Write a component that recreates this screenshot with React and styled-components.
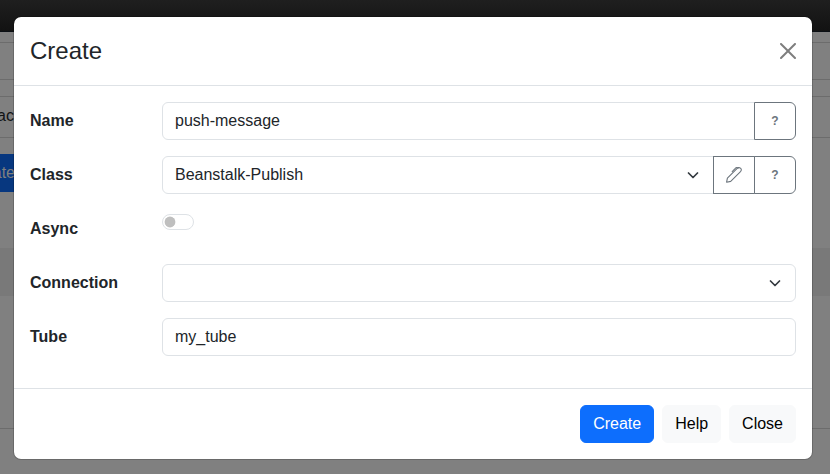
import React from "react";
import styled, { createGlobalStyle, css } from "styled-components";

const GlobalStyle = createGlobalStyle`
  *, *::before, *::after { box-sizing: border-box; }
  body {
    margin: 0;
    overflow: hidden;
    font-family: "Liberation Sans", Arial, sans-serif;
    font-size: 16px;
    line-height: 24px;
    color: #212529;
    background: #fff;
  }
  button, input { font: inherit; color: inherit; margin: 0; }
`;

const Page = styled.div`
  position: relative;
  height: 474px;
  overflow: hidden;
  background: #808080;
`;

const NavBar = styled.div`
  height: 32px;
  background: linear-gradient(#1f1f1f, #121212);
  border-bottom: 1px solid #0b0f14;
`;

const Strip = styled.div`
  height: ${(p) => p.$height}px;
  border-bottom: ${(p) => (p.$line ? "1px solid #6c6c6c" : "0")};
  background: ${(p) => p.$fill || "transparent"};
`;

const SearchField = styled.div`
  height: 41px;
  padding: 7px 0;
  border-bottom: 1px solid #6c6c6c;
  color: #111315;
  white-space: nowrap;
`;

const PageAction = styled.div`
  width: 60px;
  height: 38px;
  margin-top: 16px;
  padding: 7px 0;
  background: #07377f;
  color: #808080;
`;

const PageText = styled.span`
  display: block;
  width: ${(p) => p.$width}px;
  direction: rtl;
  white-space: nowrap;
`;

const Overlay = styled.div`
  position: absolute;
  inset: 0;
  display: flex;
  align-items: flex-start;
  justify-content: center;
  padding: 16px 17px 0 13px;
`;

const Dialog = styled.section`
  width: 800px;
  height: 444px;
  flex: none;
  display: flex;
  flex-direction: column;
  background: #fff;
  background-clip: padding-box;
  border: 1px solid rgba(0, 0, 0, 0.175);
  border-radius: 8px;
`;

const Header = styled.header`
  display: flex;
  align-items: center;
  justify-content: space-between;
  height: 69px;
  padding: 0 16px;
  border-bottom: 1px solid #dee2e6;
`;

const Title = styled.h4`
  margin: 0;
  font-size: 24px;
  font-weight: 400;
  line-height: 36px;
`;

const CloseIcon = styled.button`
  display: flex;
  padding: 0;
  border: 0;
  background: none;
  opacity: 0.5;
`;

const Body = styled.div`
  flex: 1;
  display: flex;
  flex-direction: column;
  gap: 16px;
  padding: 16px;
`;

const Row = styled.div`
  display: grid;
  grid-template-columns: 132px 1fr;
  height: 38px;
`;

const Label = styled.label`
  padding-top: 7px;
  font-weight: 700;
`;

const Group = styled.div`
  display: flex;
  min-width: 0;
`;

const control = css`
  flex: 1;
  min-width: 0;
  height: 38px;
  padding: 6px 12px;
  background: #fff;
  border: 1px solid #dee2e6;
  border-radius: ${(p) => (p.$joined ? "6px 0 0 6px" : "6px")};
`;

const Input = styled.input`
  ${control}
  outline: 0;
`;

const Select = styled.div`
  ${control}
  display: flex;
  align-items: center;
  justify-content: space-between;
`;

const Addon = styled.button`
  display: flex;
  align-items: center;
  justify-content: center;
  width: 42px;
  height: 38px;
  margin-left: -1px;
  padding: 0;
  color: #6c757d;
  background: #fff;
  border: 1px solid #6c757d;
  border-radius: ${(p) => (p.$last ? "0 6px 6px 0" : "0")};
`;

const HelpMark = styled.span`
  font-size: 12px;
  font-weight: 700;
  line-height: 12px;
`;

const Switch = styled.span`
  width: 32px;
  height: 16px;
  margin-top: 4px;
  padding: 2px;
  border: 1px solid #dee2e6;
  border-radius: 8px;
  &::before {
    content: "";
    display: block;
    width: 10px;
    height: 10px;
    border-radius: 50%;
    background: #bfbfbf;
    box-shadow: 0 0 0 0.4px #bfbfbf;
  }
`;

const Footer = styled.footer`
  display: flex;
  justify-content: flex-end;
  gap: 8px;
  height: 71px;
  padding: 16px;
  border-top: 1px solid #dee2e6;
`;

const Button = styled.button`
  height: 38px;
  padding: 6px 12px;
  line-height: 24px;
  border-radius: 6px;
  border: 1px solid ${(p) => (p.$primary ? "#0d6efd" : "#f8f9fa")};
  background: ${(p) => (p.$primary ? "#0d6efd" : "#f8f9fa")};
  color: ${(p) => (p.$primary ? "#fff" : "#000")};
`;

const Chevron = () => (
  <svg width="16" height="12" viewBox="0 0 16 12" fill="none">
    <path d="m3.5 4 4.5 4.5L12.5 4" stroke="#343a40" strokeWidth="1.75" strokeLinecap="round" strokeLinejoin="round" />
  </svg>
);

const CloseGlyph = () => (
  <svg width="16" height="16" viewBox="0 0 16 16">
    <path d="M.293.293a1 1 0 0 1 1.414 0L8 6.586 14.293.293a1 1 0 1 1 1.414 1.414L9.414 8l6.293 6.293a1 1 0 0 1-1.414 1.414L8 9.414l-6.293 6.293a1 1 0 0 1-1.414-1.414L6.586 8 .293 1.707a1 1 0 0 1 0-1.414z" />
  </svg>
);

const PenGlyph = () => (
  <svg width="16" height="16" viewBox="0 0 16 16" fill="none" stroke="currentColor" strokeLinejoin="round" strokeLinecap="round">
    <path d="M.6 15.2 1.4 11.2 11.2 1.4Q12.3.3 13.6.7Q15.1 1.2 15.3 2.5Q15.5 3.6 14.5 4.7L4.7 14.4Z" strokeWidth="1.1" />
    <path d="M6.2 4.6 9.3 1.3Q10.1.4 11.2.6L12.6.8" strokeWidth="1.1" />
  </svg>
);

const HelpAddon = () => (
  <Addon $last aria-label="Help">
    <HelpMark>?</HelpMark>
  </Addon>
);

export default function App() {
  return (
    <Page>
      <GlobalStyle />
      <NavBar />
      <Strip $height={11} $line />
      <Strip $height={37} $line />
      <Strip $height={17} $line />
      <SearchField>
        <PageText $width={14}>ac</PageText>
      </SearchField>
      <PageAction>
        <PageText $width={15}>ate</PageText>
      </PageAction>
      <Strip $height={56} />
      <Strip $height={48} $fill="#797979" />
      <Strip $height={133} $line />
      <Overlay>
        <Dialog role="dialog">
          <Header>
            <Title>Create</Title>
            <CloseIcon aria-label="Close">
              <CloseGlyph />
            </CloseIcon>
          </Header>
          <Body>
            <Row>
              <Label>Name</Label>
              <Group>
                <Input $joined defaultValue="push-message" />
                <HelpAddon />
              </Group>
            </Row>
            <Row>
              <Label>Class</Label>
              <Group>
                <Select $joined>
                  Beanstalk-Publish
                  <Chevron />
                </Select>
                <Addon aria-label="Edit">
                  <PenGlyph />
                </Addon>
                <HelpAddon />
              </Group>
            </Row>
            <Row>
              <Label>Async</Label>
              <Switch role="switch" />
            </Row>
            <Row>
              <Label>Connection</Label>
              <Group>
                <Select>
                  <span />
                  <Chevron />
                </Select>
              </Group>
            </Row>
            <Row>
              <Label>Tube</Label>
              <Group>
                <Input defaultValue="my_tube" />
              </Group>
            </Row>
          </Body>
          <Footer>
            <Button $primary>Create</Button>
            <Button>Help</Button>
            <Button>Close</Button>
          </Footer>
        </Dialog>
      </Overlay>
    </Page>
  );
}
